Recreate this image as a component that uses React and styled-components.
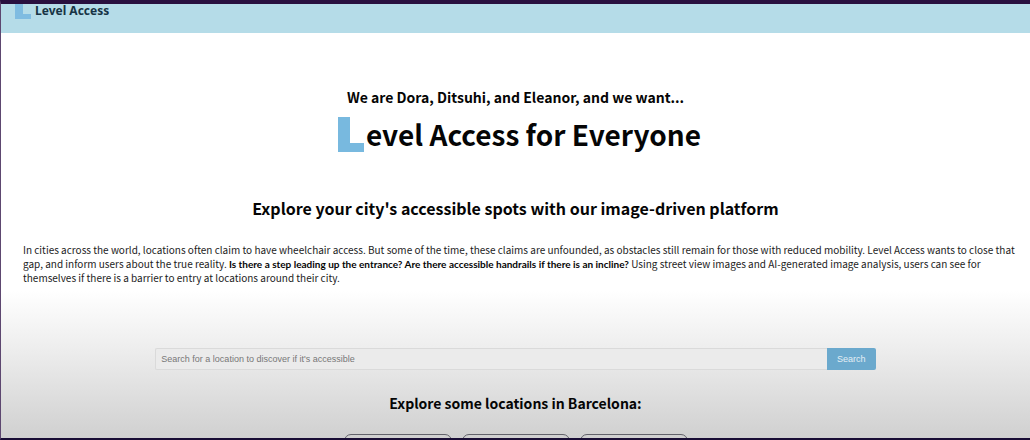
import React from "react";
import styled, { createGlobalStyle } from "styled-components";

const GlobalStyle = createGlobalStyle`
  *, *::before, *::after { box-sizing: border-box; }
  body { margin: 0; font-family: "Noto Sans CJK SC", "Noto Sans", sans-serif; color: #050505; }
  h1, h2, h3, p { margin: 0; }
`;

const Page = styled.div`
  height: 100vh;
  overflow: hidden;
  border: solid #28103f;
  border-width: 4px 0 2px 1px;
  border-left-color: #5d4770;
  border-bottom-color: #190d35;
  background: linear-gradient(to bottom, #ffffff 66%, #eeeeee 79%, #d0d0d0 100%);
`;

const Header = styled.header`
  display: flex;
  align-items: flex-start;
  gap: 4px;
  height: 29px;
  padding: 0 14px;
  background: #b5dce8;
`;

const Brand = styled.a`
  color: #173445;
  font: 700 12px/14px "Noto Sans", sans-serif;
  text-decoration: none;
`;

const SmallMark = styled.svg`
  width: 16px;
  height: 15px;
  fill: #7fbce1;
`;

const Hero = styled.main`
  display: flex;
  flex-direction: column;
  align-items: center;
  padding-top: 53px;
`;

const Intro = styled.p`
  font-size: 14px;
  font-weight: 700;
  line-height: 22px;
`;

const Title = styled.h1`
  display: flex;
  align-items: center;
  gap: 2px;
  margin-top: 6px;
  padding-left: 8px;
  font-size: 28px;
  line-height: 40px;
`;

const TitleMark = styled.svg`
  width: 26px;
  height: 36px;
  fill: #78b9df;
`;

const Subtitle = styled.h2`
  margin-top: 42px;
  font-size: 16px;
  line-height: 24px;
`;

const Description = styled.p`
  align-self: stretch;
  margin-top: 23px;
  padding: 0 12px 0 22px;
  color: #1c1c1c;
  font-size: 10px;
  line-height: 14px;

  strong { color: #050505; font-family: Lato, sans-serif; }
`;

const SearchForm = styled.form`
  display: flex;
  width: 70%;
  height: 22px;
  margin-top: 63px;
`;

const SearchInput = styled.input`
  flex: 1;
  min-width: 0;
  padding: 0 5px;
  border: 1px solid #dadada;
  border-right: 0;
  border-radius: 2px 0 0 2px;
  background: #ebebeb;
  font: 9px "Liberation Sans", sans-serif;
  outline: 0;

  &::placeholder { color: #777777; opacity: 1; }
`;

const SearchButton = styled.button`
  width: 49px;
  padding: 0;
  border: 0;
  border-radius: 0 2px 2px 0;
  background: #6ba9cd;
  color: #e4eff5;
  font: 9px "Liberation Sans", sans-serif;
`;

const LocationsTitle = styled.h3`
  margin-top: 22px;
  font-size: 14px;
  line-height: 22px;
`;

const Locations = styled.div`
  display: flex;
  gap: 10px;
  margin-top: 20px;
`;

const LocationCard = styled.article`
  width: 108px;
  height: 120px;
  border: 1px solid #62626a;
  border-radius: 7px;
`;

export default function App() {
  return (
    <>
      <GlobalStyle />
      <Page>
        <Header>
          <SmallMark viewBox="0 0 16 15" aria-hidden="true">
            <path d="M0 0H8V10H16V15H0Z" />
          </SmallMark>
          <Brand href="#">Level Access</Brand>
        </Header>
        <Hero>
          <Intro>We are Dora, Ditsuhi, and Eleanor, and we want...</Intro>
          <Title>
            <TitleMark viewBox="0 0 26 36" role="img" aria-label="L">
              <path d="M0 1H12V27H26V36H0Z" />
            </TitleMark>
            <span>evel Access for Everyone</span>
          </Title>
          <Subtitle>Explore your city's accessible spots with our image-driven platform</Subtitle>
          <Description>
            In cities across the world, locations often claim to have wheelchair access. But some of the time, these claims are unfounded, as obstacles still remain for those with reduced mobility. Level Access wants to close that gap, and inform users about the true reality. <strong>Is there a step leading up the entrance? Are there accessible handrails if there is an incline?</strong> Using street view images and AI-generated image analysis, users can see for themselves if there is a barrier to entry at locations around their city.
          </Description>
          <SearchForm onSubmit={(event) => event.preventDefault()}>
            <SearchInput
              type="text"
              aria-label="Search for a location"
              placeholder="Search for a location to discover if it's accessible"
            />
            <SearchButton type="submit">Search</SearchButton>
          </SearchForm>
          <LocationsTitle>Explore some locations in Barcelona:</LocationsTitle>
          <Locations>
            <LocationCard />
            <LocationCard />
            <LocationCard />
          </Locations>
        </Hero>
      </Page>
    </>
  );
}
